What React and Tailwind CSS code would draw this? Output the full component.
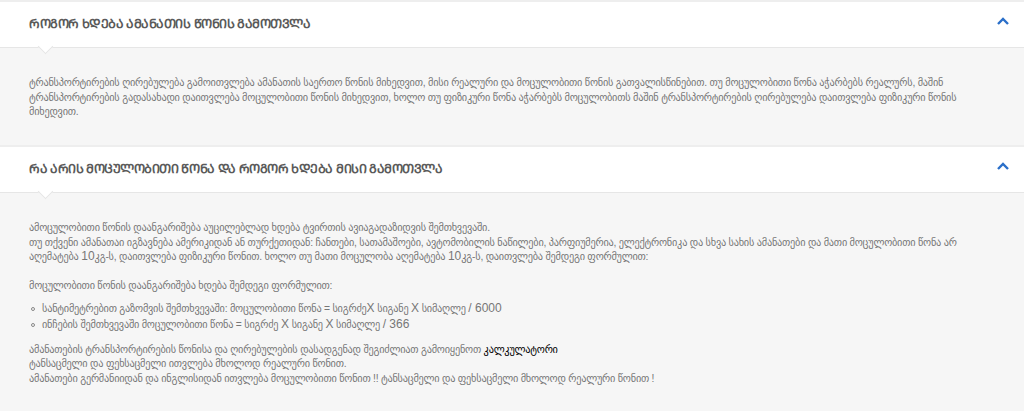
function Chevron() {
  return (
    <svg width="12" height="8" viewBox="0 0 12 8" className="mb-[7px] shrink-0">
      <path d="M1 7 L6 2 L11 7" fill="none" stroke="#2a6fc9" strokeWidth="2.4" />
    </svg>
  );
}

function Header({ title }) {
  return (
    <div className="relative z-10 flex h-[46px] items-center justify-between border-b border-[#e6e6e6] bg-white pl-[29px] pr-[15px]">
      <h3 className="mb-[2px] text-[12.5px] leading-[18px] font-bold tracking-[-0.47px] text-[#5a5a5a]">{title}</h3>
      <Chevron />
      <span className="absolute left-[40px] top-[39px] h-[11px] w-[11px] rotate-45 border-r border-b border-[#e6e6e6] bg-white"></span>
    </div>
  );
}

function L({ children }) {
  return <span className="inline-block text-[12px] leading-[10px] tracking-normal">{children}</span>;
}

function Bullet() {
  return <span className="h-[4px] w-[4px] shrink-0 rounded-full border border-[#888888]"></span>;
}

export default function App() {
  return (
    <div className="h-[411px] overflow-hidden bg-[#f6f6f6] text-[10.3px] leading-[14.5px] tracking-[-0.23px] text-[#777777] font-['Liberation_Sans','DejaVu_Sans',sans-serif]">
      <section className="border-t-2 border-[#eeeeee]">
        <Header title="ᲠᲝᲒᲝᲠ ᲮᲓᲔᲑᲐ ᲐᲛᲐᲜᲐᲗᲘᲡ ᲬᲝᲜᲘᲡ ᲒᲐᲛᲝᲗᲕᲚᲐ" />
        <div className="h-[97px] pl-[29px] pr-[29px] pt-[28px]">
          <p>ტრანსპორტირების ღირებულება გამოითვლება ამანათის საერთო წონის მიხედვით, მისი რეალური და მოცულობითი წონის გათვალისწინებით. თუ მოცულობითი წონა აჭარბებს რეალურს, მაშინ ტრანსპორტირების გადასახადი დაითვლება მოცულობითი წონის მიხედვით, ხოლო თუ ფიზიკური წონა აჭარბებს მოცულობითს მაშინ ტრანსპორტირების ღირებულება დაითვლება ფიზიკური წონის მიხედვით.</p>
        </div>
      </section>
      <section className="border-t-2 border-[#eeeeee]">
        <Header title="ᲠᲐ ᲐᲠᲘᲡ ᲛᲝᲪᲣᲚᲝᲑᲘᲗᲘ ᲬᲝᲜᲐ ᲓᲐ ᲠᲝᲒᲝᲠ ᲮᲓᲔᲑᲐ ᲛᲘᲡᲘ ᲒᲐᲛᲝᲗᲕᲚᲐ" />
        <div className="pl-[29px] pr-[29px] pt-[28px]">
          <p>ამოცულობითი წონის დაანგარიშება აუცილებლად ხდება ტვირთის ავიაგადაზიდვის შემთხვევაში.<br />თუ თქვენი ამანათაი იგზავნება ამერიკიდან ან თურქეთიდან: ჩანთები, სათამაშოები, ავტომობილის ნაწილები, პარფიუმერია, ელექტრონიკა და სხვა სახის ამანათები და მათი მოცულობითი წონა არ აღემატება <L>10</L>კგ-ს, დაითვლება ფიზიკური წონით. ხოლო თუ მათი მოცულობა აღემატება <L>10</L>კგ-ს, დაითვლება შემდეგი ფორმულით:</p>
          <p className="mt-[14px]">მოცულობითი წონის დაანგარიშება ხდება შემდეგი ფორმულით:</p>
          <ul className="mt-[9px] flex flex-col gap-[1.5px] pl-[2px] list-none">
            <li className="flex items-center gap-[7px]"><Bullet /><span>სანტიმეტრებით გაზომვის შემთხვევაში: მოცულობითი წონა = სიგრძე<L>X</L> სიგანე <L>X</L> სიმაღლე <L>/ 6000</L></span></li>
            <li className="flex items-center gap-[7px]"><Bullet /><span>ინჩების შემთხვევაში მოცულობითი წონა = სიგრძე <L>X</L> სიგანე <L>X</L> სიმაღლე <L>/ 366</L></span></li>
          </ul>
          <p className="mt-[10px]">ამანათების ტრანსპორტირების წონისა და ღირებულების დასადგენად შეგიძლიათ გამოიყენოთ <a className="font-medium text-black">კალკულატორი</a><br />ტანსაცმელი და ფეხსაცმელი ითვლება მხოლოდ რეალური წონით.<br />ამანათები გერმანიიდან და ინგლისიდან ითვლება მოცულობითი წონით !! ტანსაცმელი და ფეხსაცმელი მხოლოდ რეალური წონით !</p>
        </div>
      </section>
    </div>
  );
}
